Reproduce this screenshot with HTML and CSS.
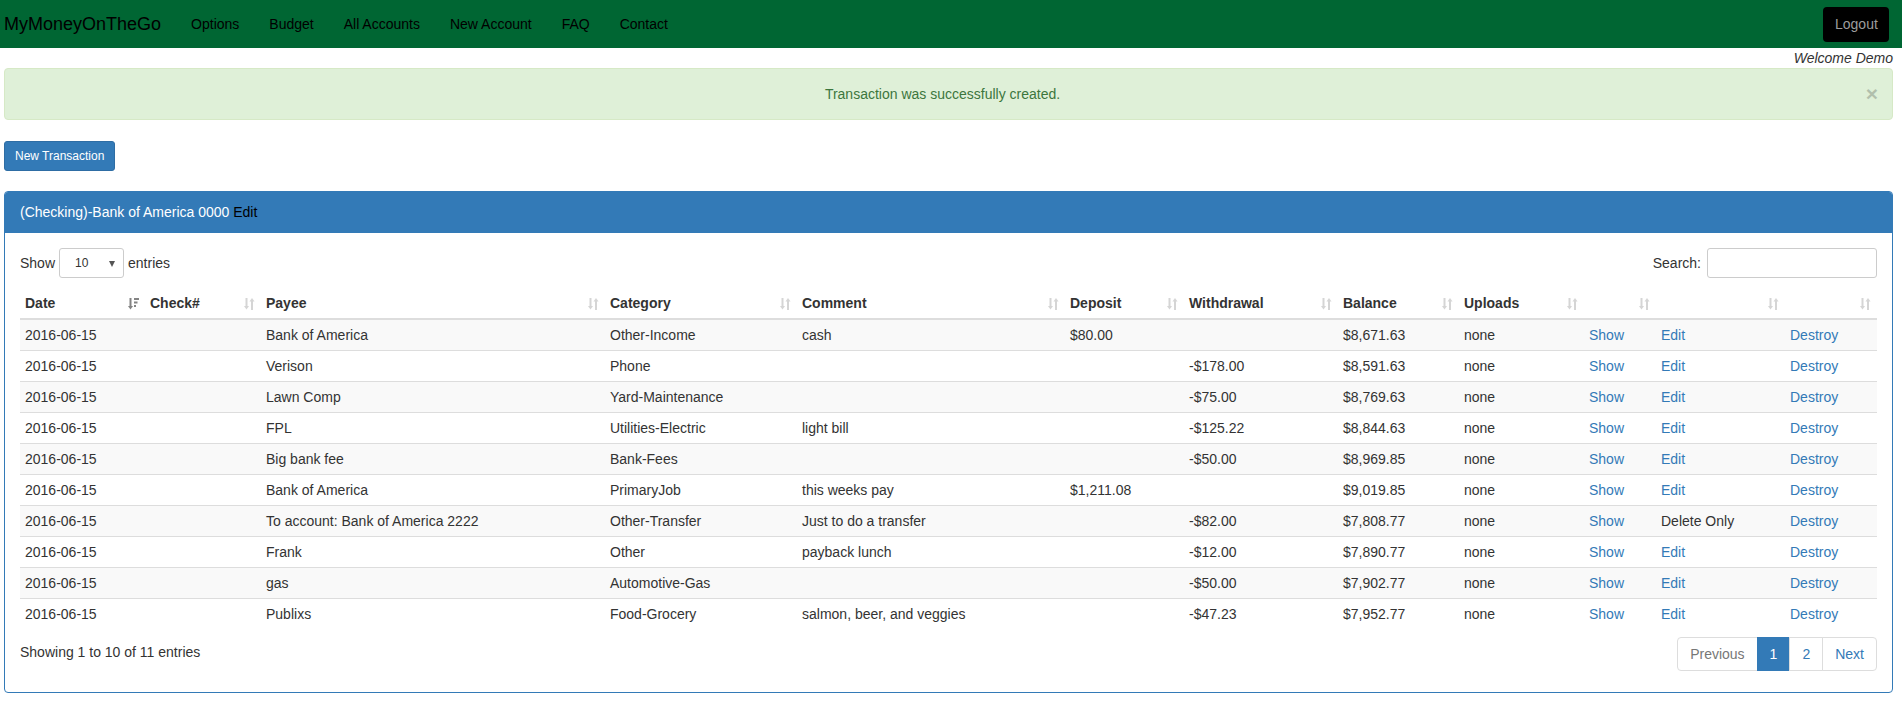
FILE: index.html
```html
<!DOCTYPE html>
<html lang="en">
<head>
<meta charset="utf-8">
<title>MyMoneyOnTheGo</title>
<link rel="stylesheet" href="styles.css">
</head>
<body>
<nav class="navbar">
  <a class="brand" href="#">MyMoneyOnTheGo</a>
  <ul class="nav">
    <li><a href="#">Options</a></li>
    <li><a href="#">Budget</a></li>
    <li><a href="#">All Accounts</a></li>
    <li><a href="#">New Account</a></li>
    <li><a href="#">FAQ</a></li>
    <li><a href="#">Contact</a></li>
  </ul>
  <a class="logout" href="#">Logout</a>
</nav>
<main class="page">
  <div class="welcome">Welcome Demo</div>
  <div class="alert">Transaction was successfully created.<span class="close">&times;</span></div>
  <a class="btn-new" href="#">New Transaction</a>
  <section class="panel">
    <div class="panel-heading">(Checking)-Bank of America 0000 <a class="edit-link" href="#">Edit</a></div>
    <div class="panel-body">
      <div class="dt-top">
        <label class="length">Show <span class="select">10<span class="caret"></span></span> entries</label>
        <label class="filter">Search: <span class="search"></span></label>
      </div>
      <table class="table">
        <colgroup>
          <col class="c-date"><col class="c-check"><col class="c-payee"><col class="c-cat"><col class="c-comment"><col class="c-dep"><col class="c-wd"><col class="c-bal"><col class="c-up"><col class="c-show"><col class="c-edit"><col class="c-destroy">
        </colgroup>
        <thead>
          <tr>
            <th>Date<svg class="sort active" viewBox="0 0 11 12"><rect x="1.5" y="0" width="2" height="8"/><polygon points="0,8 5,8 2.5,11.5"/><rect x="6" y="0" width="5" height="2"/><rect x="6" y="3.5" width="3.5" height="2"/><rect x="6" y="7" width="2" height="2"/></svg></th>
            <th>Check#<svg class="sort" viewBox="0 0 11 12"><rect x="1.5" y="0" width="2" height="8.5"/><polygon points="0,8 5,8 2.5,11.5"/><polygon points="5.5,3.5 10.5,3.5 8,0"/><rect x="7" y="3" width="2" height="9"/></svg></th>
            <th>Payee<svg class="sort" viewBox="0 0 11 12"><rect x="1.5" y="0" width="2" height="8.5"/><polygon points="0,8 5,8 2.5,11.5"/><polygon points="5.5,3.5 10.5,3.5 8,0"/><rect x="7" y="3" width="2" height="9"/></svg></th>
            <th>Category<svg class="sort" viewBox="0 0 11 12"><rect x="1.5" y="0" width="2" height="8.5"/><polygon points="0,8 5,8 2.5,11.5"/><polygon points="5.5,3.5 10.5,3.5 8,0"/><rect x="7" y="3" width="2" height="9"/></svg></th>
            <th>Comment<svg class="sort" viewBox="0 0 11 12"><rect x="1.5" y="0" width="2" height="8.5"/><polygon points="0,8 5,8 2.5,11.5"/><polygon points="5.5,3.5 10.5,3.5 8,0"/><rect x="7" y="3" width="2" height="9"/></svg></th>
            <th>Deposit<svg class="sort" viewBox="0 0 11 12"><rect x="1.5" y="0" width="2" height="8.5"/><polygon points="0,8 5,8 2.5,11.5"/><polygon points="5.5,3.5 10.5,3.5 8,0"/><rect x="7" y="3" width="2" height="9"/></svg></th>
            <th>Withdrawal<svg class="sort" viewBox="0 0 11 12"><rect x="1.5" y="0" width="2" height="8.5"/><polygon points="0,8 5,8 2.5,11.5"/><polygon points="5.5,3.5 10.5,3.5 8,0"/><rect x="7" y="3" width="2" height="9"/></svg></th>
            <th>Balance<svg class="sort" viewBox="0 0 11 12"><rect x="1.5" y="0" width="2" height="8.5"/><polygon points="0,8 5,8 2.5,11.5"/><polygon points="5.5,3.5 10.5,3.5 8,0"/><rect x="7" y="3" width="2" height="9"/></svg></th>
            <th>Uploads<svg class="sort" viewBox="0 0 11 12"><rect x="1.5" y="0" width="2" height="8.5"/><polygon points="0,8 5,8 2.5,11.5"/><polygon points="5.5,3.5 10.5,3.5 8,0"/><rect x="7" y="3" width="2" height="9"/></svg></th>
            <th><svg class="sort" viewBox="0 0 11 12"><rect x="1.5" y="0" width="2" height="8.5"/><polygon points="0,8 5,8 2.5,11.5"/><polygon points="5.5,3.5 10.5,3.5 8,0"/><rect x="7" y="3" width="2" height="9"/></svg></th>
            <th><svg class="sort" viewBox="0 0 11 12"><rect x="1.5" y="0" width="2" height="8.5"/><polygon points="0,8 5,8 2.5,11.5"/><polygon points="5.5,3.5 10.5,3.5 8,0"/><rect x="7" y="3" width="2" height="9"/></svg></th>
            <th><svg class="sort" viewBox="0 0 11 12"><rect x="1.5" y="0" width="2" height="8.5"/><polygon points="0,8 5,8 2.5,11.5"/><polygon points="5.5,3.5 10.5,3.5 8,0"/><rect x="7" y="3" width="2" height="9"/></svg></th>
          </tr>
        </thead>
        <tbody>
          <tr><td>2016-06-15</td><td></td><td>Bank of America</td><td>Other-Income</td><td>cash</td><td>$80.00</td><td></td><td>$8,671.63</td><td>none</td><td><a href="#">Show</a></td><td><a href="#">Edit</a></td><td><a href="#">Destroy</a></td></tr>
          <tr><td>2016-06-15</td><td></td><td>Verison</td><td>Phone</td><td></td><td></td><td>-$178.00</td><td>$8,591.63</td><td>none</td><td><a href="#">Show</a></td><td><a href="#">Edit</a></td><td><a href="#">Destroy</a></td></tr>
          <tr><td>2016-06-15</td><td></td><td>Lawn Comp</td><td>Yard-Maintenance</td><td></td><td></td><td>-$75.00</td><td>$8,769.63</td><td>none</td><td><a href="#">Show</a></td><td><a href="#">Edit</a></td><td><a href="#">Destroy</a></td></tr>
          <tr><td>2016-06-15</td><td></td><td>FPL</td><td>Utilities-Electric</td><td>light bill</td><td></td><td>-$125.22</td><td>$8,844.63</td><td>none</td><td><a href="#">Show</a></td><td><a href="#">Edit</a></td><td><a href="#">Destroy</a></td></tr>
          <tr><td>2016-06-15</td><td></td><td>Big bank fee</td><td>Bank-Fees</td><td></td><td></td><td>-$50.00</td><td>$8,969.85</td><td>none</td><td><a href="#">Show</a></td><td><a href="#">Edit</a></td><td><a href="#">Destroy</a></td></tr>
          <tr><td>2016-06-15</td><td></td><td>Bank of America</td><td>PrimaryJob</td><td>this weeks pay</td><td>$1,211.08</td><td></td><td>$9,019.85</td><td>none</td><td><a href="#">Show</a></td><td><a href="#">Edit</a></td><td><a href="#">Destroy</a></td></tr>
          <tr><td>2016-06-15</td><td></td><td>To account: Bank of America 2222</td><td>Other-Transfer</td><td>Just to do a transfer</td><td></td><td>-$82.00</td><td>$7,808.77</td><td>none</td><td><a href="#">Show</a></td><td>Delete Only</td><td><a href="#">Destroy</a></td></tr>
          <tr><td>2016-06-15</td><td></td><td>Frank</td><td>Other</td><td>payback lunch</td><td></td><td>-$12.00</td><td>$7,890.77</td><td>none</td><td><a href="#">Show</a></td><td><a href="#">Edit</a></td><td><a href="#">Destroy</a></td></tr>
          <tr><td>2016-06-15</td><td></td><td>gas</td><td>Automotive-Gas</td><td></td><td></td><td>-$50.00</td><td>$7,902.77</td><td>none</td><td><a href="#">Show</a></td><td><a href="#">Edit</a></td><td><a href="#">Destroy</a></td></tr>
          <tr><td>2016-06-15</td><td></td><td>Publixs</td><td>Food-Grocery</td><td>salmon, beer, and veggies</td><td></td><td>-$47.23</td><td>$7,952.77</td><td>none</td><td><a href="#">Show</a></td><td><a href="#">Edit</a></td><td><a href="#">Destroy</a></td></tr>
        </tbody>
      </table>
      <div class="dt-bottom">
        <div class="info">Showing 1 to 10 of 11 entries</div>
        <ul class="pagination">
          <li class="disabled"><a href="#">Previous</a></li>
          <li class="active"><a href="#">1</a></li>
          <li><a href="#">2</a></li>
          <li><a href="#">Next</a></li>
        </ul>
      </div>
    </div>
  </section>
</main>
</body>
</html>
```

FILE: styles.css
```css
* { box-sizing: border-box; }
html, body { margin: 0; padding: 0; }
body {
  font-family: "Liberation Sans", Arial, Helvetica, sans-serif;
  font-size: 14px;
  line-height: 20px;
  color: #333;
  background: #fff;
}
a { color: #337ab7; text-decoration: none; }

.navbar {
  display: flex;
  align-items: center;
  height: 48px;
  background: #006633;
  padding: 0 13px 0 4px;
}
.brand {
  color: #000;
  font-size: 18px;
  line-height: 20px;
  padding-right: 15px;
}
.nav {
  display: flex;
  list-style: none;
  margin: 0;
  padding: 0;
  flex: 1;
}
.nav a {
  display: block;
  color: #000;
  padding: 0 15px;
  line-height: 20px;
}
.logout {
  display: block;
  background: #000;
  color: #9d9d9d;
  border-radius: 4px;
  padding: 7px 12px;
  line-height: 20px;
  width: 66px;
  height: 35px;
  text-align: center;
}

.page {
  margin: 0 9px 0 4px;
}
.welcome {
  text-align: right;
  font-style: italic;
  line-height: 20px;
  height: 20px;
}
.alert {
  position: relative;
  background: #dff0d8;
  border: 1px solid #d6e9c6;
  color: #3c763d;
  border-radius: 4px;
  padding: 15px 27px 15px 15px;
  text-align: center;
  margin-bottom: 21px;
}
.close {
  position: absolute;
  right: 14px;
  top: 14px;
  font-size: 21px;
  font-weight: bold;
  line-height: 21px;
  color: #000;
  opacity: .2;
}
.btn-new {
  display: inline-block;
  background: #337ab7;
  border: 1px solid #2e6da4;
  color: #fff;
  border-radius: 3px;
  font-size: 12px;
  line-height: 18px;
  padding: 5px 10px;
  white-space: nowrap;
  text-align: center;
}

.panel {
  margin-top: 20px;
  border: 1px solid #337ab7;
  border-radius: 4px;
}
.panel-heading {
  background: #337ab7;
  color: #fff;
  padding: 10px 15px;
  border-bottom: 1px solid #337ab7;
  border-radius: 3px 3px 0 0;
  line-height: 20px;
  height: 41px;
}
.edit-link { color: #000; }
.panel-body {
  padding: 15px;
}

.dt-top {
  display: flex;
  justify-content: space-between;
  align-items: center;
  height: 30px;
}
.length, .filter {
  display: flex;
  align-items: center;
  gap: 4px;
  font-weight: normal;
}
.select {
  position: relative;
  display: inline-block;
  width: 65px;
  height: 30px;
  border: 1px solid #ccc;
  border-radius: 3px;
  font-size: 12px;
  line-height: 28px;
  padding-left: 15px;
}
.caret {
  position: absolute;
  right: 8px;
  top: 12px;
  width: 0;
  height: 0;
  border-left: 3.5px solid transparent;
  border-right: 3.5px solid transparent;
  border-top: 6px solid #555;
}
.search {
  display: inline-block;
  width: 170px;
  height: 30px;
  border: 1px solid #ccc;
  border-radius: 3px;
  margin-left: 2px;
}

.table {
  width: 100%;
  table-layout: fixed;
  border-collapse: collapse;
  margin-top: 10px;
}
.c-date { width: 125px; }
.c-check { width: 116px; }
.c-payee { width: 344px; }
.c-cat { width: 192px; }
.c-comment { width: 268px; }
.c-dep { width: 119px; }
.c-wd { width: 154px; }
.c-bal { width: 121px; }
.c-up { width: 125px; }
.c-show { width: 72px; }
.c-edit { width: 129px; }
.c-destroy { width: auto; }

.table th {
  position: relative;
  text-align: left;
  font-weight: bold;
  padding: 5px 30px 5px 5px;
  border-bottom: 2px solid #ddd;
  line-height: 20px;
  white-space: nowrap;
}
.sort {
  position: absolute;
  right: 6px;
  top: 10px;
  width: 11px;
  height: 12px;
  fill: #333;
  opacity: .2;
}
.sort.active { opacity: .6; }
.table td {
  padding: 5px;
  border-top: 1px solid #ddd;
  line-height: 20px;
  white-space: nowrap;
}
.table tbody tr:first-child td { border-top: 0; }
.table tbody tr:nth-child(odd) { background: #f9f9f9; }

.dt-bottom {
  display: flex;
  justify-content: space-between;
  align-items: flex-start;
  margin-top: 6px;
}
.info {
  padding-top: 7px;
}
.pagination {
  display: flex;
  list-style: none;
  margin: 2px 0 6px;
  padding: 0;
}
.pagination a {
  display: block;
  padding: 6px 12px;
  line-height: 20px;
  border: 1px solid #ddd;
  margin-left: -1px;
  color: #337ab7;
  background: #fff;
}
.pagination li:first-child a { border-radius: 4px 0 0 4px; margin-left: 0; }
.pagination li:last-child a { border-radius: 0 4px 4px 0; }
.pagination .disabled a { color: #777; }
.pagination .active a {
  background: #337ab7;
  border-color: #337ab7;
  color: #fff;
}
```
